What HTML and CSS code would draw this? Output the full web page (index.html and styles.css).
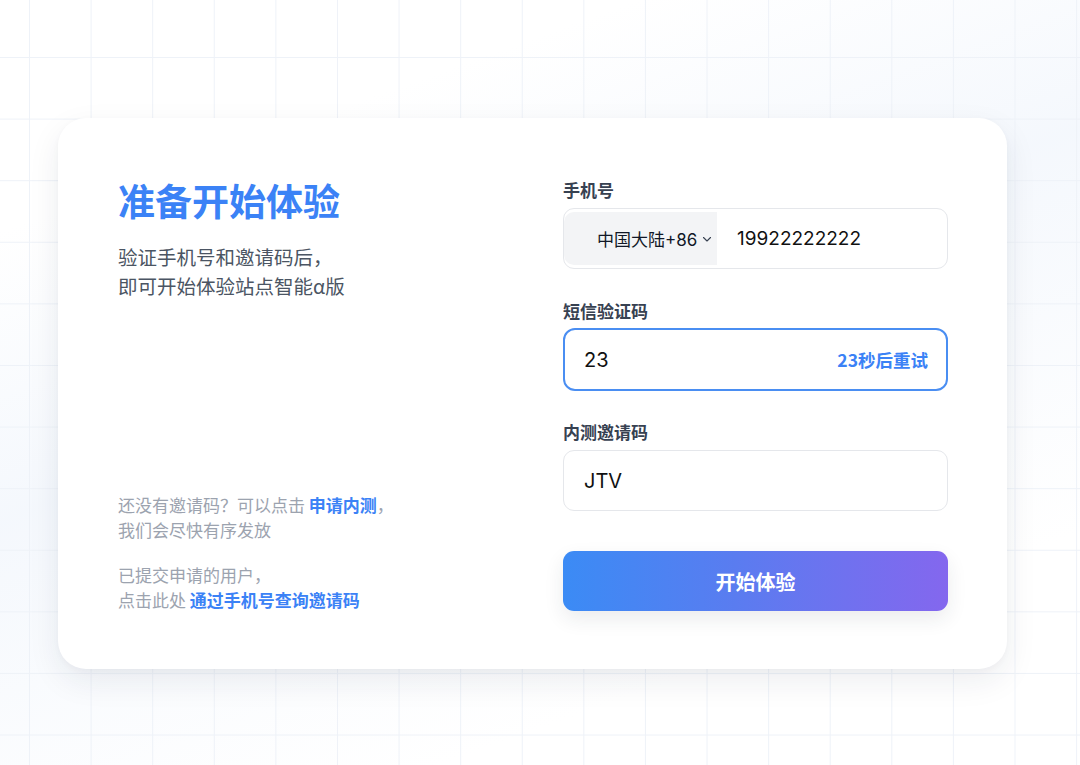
FILE: index.html
```html
<!DOCTYPE html>
<html lang="zh-CN">
<head>
<meta charset="utf-8">
<title>准备开始体验</title>
<link rel="stylesheet" href="styles.css">
</head>
<body>
<div class="page">
  <div class="card">
    <div class="intro">
      <div class="intro-top">
        <h1 class="title">准备开始体验</h1>
        <p class="subtitle">验证手机号和邀请码后，<br>即可开始体验站点智能α版</p>
      </div>
      <div class="intro-bottom">
        <p class="note">还没有邀请码？可以点击 <a class="link">申请内测</a>，<br>我们会尽快有序发放</p>
        <p class="note">已提交申请的用户，<br>点击此处 <a class="link">通过手机号查询邀请码</a></p>
      </div>
    </div>
    <div class="form">
      <div class="field">
        <div class="label">手机号</div>
        <div class="input phone">
          <div class="select">中国大陆+86<svg class="chev" width="10" height="10" viewBox="0 0 10 10"><path d="M1.5 3.5 L5 7 L8.5 3.5" fill="none" stroke="#374151" stroke-width="1.1" stroke-linecap="round" stroke-linejoin="round"/></svg></div>
          <div class="value phone-value">19922222222</div>
        </div>
      </div>
      <div class="field">
        <div class="label">短信验证码</div>
        <div class="input focused">
          <div class="value">23</div>
          <div class="countdown">23秒后重试</div>
        </div>
      </div>
      <div class="field">
        <div class="label">内测邀请码</div>
        <div class="input">
          <div class="value">JTV</div>
        </div>
      </div>
      <button class="submit">开始体验</button>
    </div>
  </div>
</div>
</body>
</html>
```

FILE: styles.css
```css
html, body {
  margin: 0;
  padding: 0;
}
body {
  width: 1080px;
  height: 765px;
  overflow: hidden;
  font-family: Inter, "Noto Sans CJK SC", sans-serif;
  background-color: #ffffff;
  background-image:
    linear-gradient(to right, #eef2f8 1px, transparent 1px),
    linear-gradient(to bottom, #eef2f8 1px, transparent 1px),
    linear-gradient(160deg, rgba(240,245,252,0) 20%, rgba(240,245,252,0.7) 45%, rgba(240,245,252,0) 80%);
  background-size: 61.6px 61.6px, 61.6px 61.6px, 100% 100%;
  background-position: 29px 57px, 29px 57px, 0 0;
}
.page {
  display: flex;
  padding: 118px 0 0 58px;
}
.card {
  width: 949px;
  height: 551px;
  box-sizing: border-box;
  background: #ffffff;
  border-radius: 28px;
  box-shadow: 0 12px 32px rgba(30, 41, 59, 0.08), 0 2px 6px rgba(30, 41, 59, 0.03);
  padding: 60px 59px 57px 60px;
  display: flex;
  gap: 40px;
}
.intro {
  flex: 1;
  display: flex;
  flex-direction: column;
  justify-content: space-between;
}
.title {
  margin: 0;
  font-family: "Noto Sans CJK SC", sans-serif;
  font-size: 37px;
  line-height: 44px;
  font-weight: 700;
  color: #3b82f6;
  letter-spacing: 0;
}
.subtitle {
  margin: 20px 0 0;
  font-family: "Noto Sans CJK SC", sans-serif;
  font-size: 19.5px;
  line-height: 29px;
  color: #4b5563;
}
.intro-bottom {
  display: flex;
  flex-direction: column;
  gap: 20px;
}
.note {
  margin: 0;
  font-family: "Noto Sans CJK SC", sans-serif;
  font-size: 17px;
  line-height: 25px;
  color: #9ca3af;
}
.link {
  color: #3b82f6;
  font-weight: 700;
}
.form {
  width: 385px;
  display: flex;
  flex-direction: column;
  padding-top: 1px;
}
.field {
  display: flex;
  flex-direction: column;
  margin-bottom: 31px;
}
.field:nth-child(3) {
  margin-bottom: 40px;
}
.label {
  font-family: "Noto Sans CJK SC", sans-serif;
  font-size: 17px;
  line-height: 22px;
  font-weight: 600;
  color: #374151;
  margin-bottom: 7px;
}
.input {
  height: 61px;
  box-sizing: border-box;
  border: 1px solid #e5e7eb;
  border-radius: 11px;
  display: flex;
  align-items: center;
  padding: 0 19px 0 20px;
  background: #fff;
}
.input.focused {
  height: 63px;
  margin: -1px 0 -1px;
  border: 2px solid #4a8ef2;
  border-radius: 12px;
  padding: 0 18px 0 19px;
  justify-content: space-between;
}
.input.phone {
  padding: 3px 0 3px 0;
  align-items: stretch;
}
.select {
  width: 153px;
  box-sizing: border-box;
  background: #f3f4f6;
  border-radius: 10px 0 0 10px;
  display: flex;
  align-items: center;
  padding-left: 33px;
  font-size: 17px;
  color: #111827;
}
.chev {
  margin-left: 5px;
  margin-top: 1px;
}
.value {
  font-size: 20px;
  color: #111111;
}
.phone-value {
  display: flex;
  align-items: center;
  padding-left: 20px;
  font-size: 19px;
}
.countdown {
  font-family: "Noto Sans CJK SC", sans-serif;
  font-size: 17.5px;
  font-weight: 700;
  color: #3b82f6;
}
.submit {
  height: 60px;
  border: none;
  border-radius: 11px;
  background: linear-gradient(90deg, #3b8bf5 0%, #5a7cf0 45%, #8467ee 100%);
  color: #ffffff;
  font-family: "Noto Sans CJK SC", sans-serif;
  font-size: 20px;
  font-weight: 700;
  box-shadow: 0 8px 20px rgba(30, 41, 59, 0.09);
  cursor: pointer;
}
```
